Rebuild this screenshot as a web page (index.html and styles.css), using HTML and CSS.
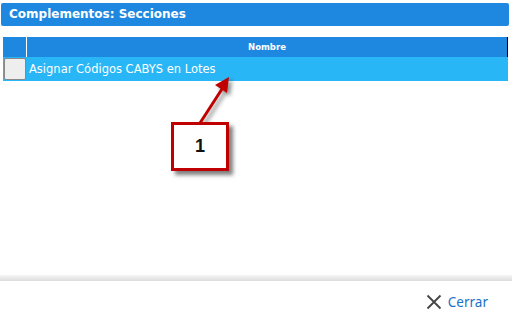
FILE: index.html
```html
<!DOCTYPE html>
<html lang="es">
<head>
    <meta charset="UTF-8">
    <title>Complementos: Secciones</title>
    <link rel="stylesheet" href="styles.css">
</head>
<body>
    <div class="dialog">
        <div class="title-bar">Complementos: Secciones</div>

        <div class="grid">
            <div class="grid-header">
                <div class="sel-col"></div>
                <div class="name-col">Nombre</div>
            </div>
            <div class="grid-row">
                <div class="sel-col"><span class="check"></span></div>
                <div class="name-col">Asignar Códigos CABYS en Lotes</div>
            </div>
        </div>

        <div class="spacer"></div>
        <div class="separator"></div>

        <div class="footer">
            <button class="close-btn">
                <svg width="16" height="16" viewBox="0 0 16 16">
                    <path d="M1.5 1.5 L14.5 14.5 M14.5 1.5 L1.5 14.5" stroke="#444" stroke-width="1.8" fill="none"/>
                </svg>
                Cerrar
            </button>
        </div>
    </div>

    <!-- annotation callout -->
    <svg class="callout-arrow" width="512" height="322" viewBox="0 0 512 322">
        <line x1="200" y1="123" x2="222" y2="89" stroke="#c00000" stroke-width="3"/>
        <polygon points="229,77 227,93 215,85" fill="#c00000"/>
    </svg>
    <div class="callout-box">1</div>
</body>
</html>
```

FILE: styles.css
```css
body {
    margin: 0;
    background-color: #fff;
    font-family: "DejaVu Sans", Verdana, sans-serif;
}
.dialog {
    display: flex;
    flex-direction: column;
    height: 322px;
}
.title-bar {
    margin: 3px 3px 0 1px;
    height: 23px;
    line-height: 23px;
    padding-left: 8px;
    background-color: #1e88e0;
    border-radius: 2px;
    color: #fff;
    font-weight: bold;
    font-size: 12px;
}
.grid {
    margin: 11px 0 0 3px;
    width: 505px;
}
.grid-header {
    display: flex;
    height: 20px;
    background-color: #1e88e0;
    border-right: 1px solid #000;
    color: #fff;
    font-weight: bold;
    font-size: 8.5px;
}
.grid-header .sel-col {
    width: 23px;
    border-right: 1px solid #fff;
}
.grid-header .name-col {
    flex: 1;
    text-align: center;
    line-height: 20px;
}
.grid-row {
    display: flex;
    height: 24px;
    background-color: #29b6f6;
    color: #fff;
    font-size: 11.5px;
}
.grid-row .sel-col {
    width: 24px;
    padding: 1px 0 0 1px;
}
.check {
    display: block;
    width: 20px;
    height: 20px;
    background-color: #eee;
    border: 1px solid #888;
    border-radius: 2px;
}
.grid-row .name-col {
    flex: 1;
    line-height: 24px;
    padding-left: 1px;
}
.spacer {
    flex: 1;
}
.separator {
    height: 6px;
    background: linear-gradient(#f6f6f6, #dcdcdc);
}
.footer {
    height: 41px;
    display: flex;
    align-items: center;
    justify-content: flex-end;
    padding-right: 24px;
}
.close-btn {
    display: flex;
    align-items: center;
    gap: 6px;
    background: none;
    border: none;
    padding: 0;
    color: #1a72c9;
    font-family: "Noto Sans", sans-serif;
    font-size: 13.5px;
    cursor: pointer;
}

/* callout over the content */
.callout-arrow {
    position: absolute;
    left: 0;
    top: 0;
    filter: drop-shadow(3px 3px 2px rgba(0, 0, 0, 0.45));
}
.callout-box {
    position: absolute;
    left: 171px;
    top: 122px;
    width: 52px;
    height: 43px;
    border: 3px solid #c00000;
    background-color: #fff;
    box-shadow: 4px 4px 4px rgba(0, 0, 0, 0.5);
    font-family: "Liberation Sans", Arial, sans-serif;
    font-weight: bold;
    font-size: 18px;
    line-height: 43px;
    text-align: center;
    color: #111;
}
```
